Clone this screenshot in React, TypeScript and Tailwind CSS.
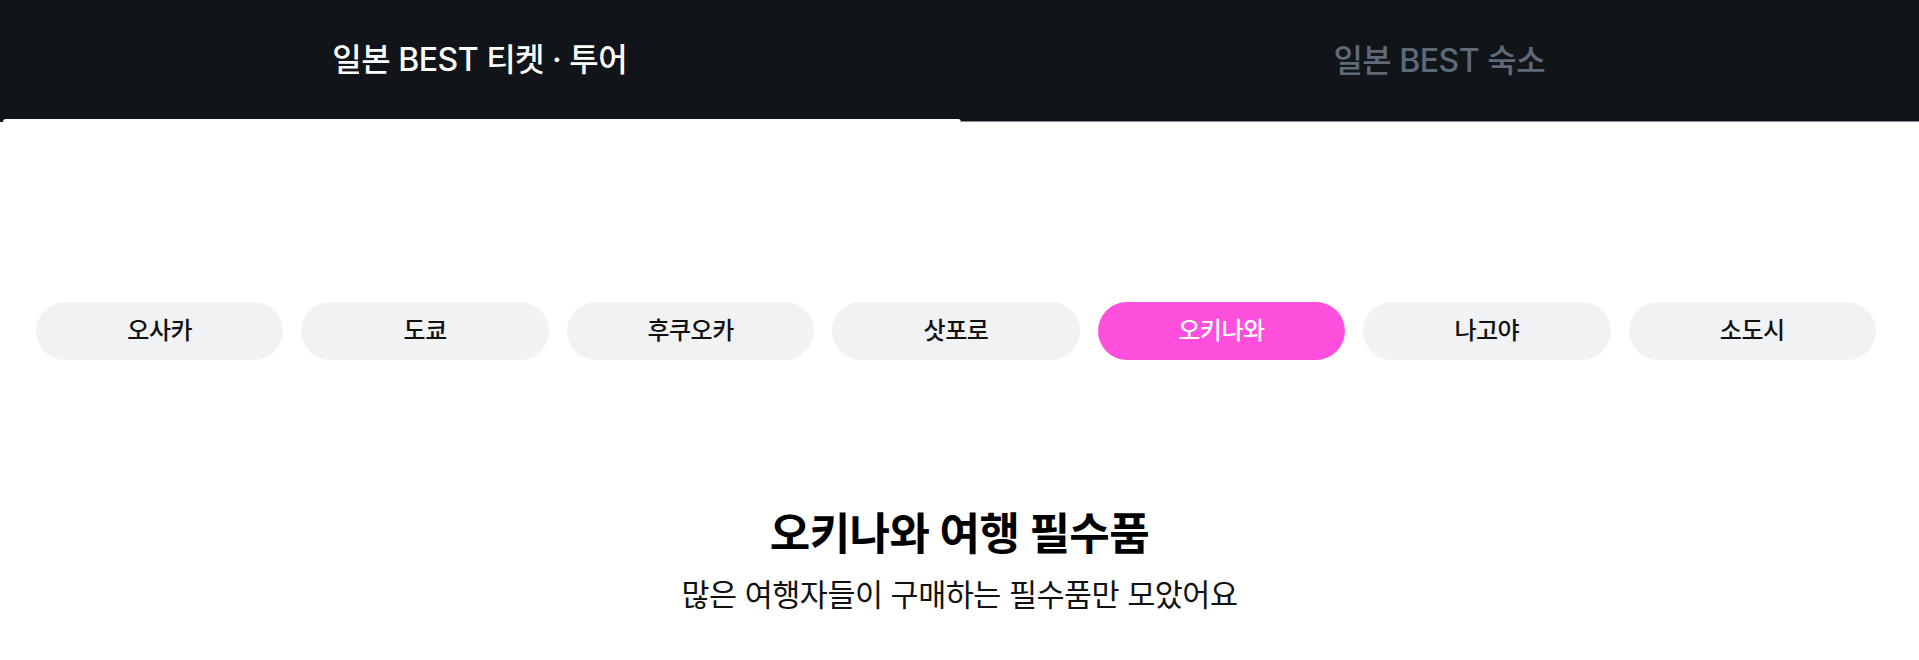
import React, { useState } from "react"

const cities = ["오사카", "도쿄", "후쿠오카", "삿포로", "오키나와", "나고야", "소도시"]

export default function App() {
  const [tab, setTab] = useState(0)
  const [city, setCity] = useState("오키나와")

  return (
    <div className="w-full min-h-[660px] bg-white font-['Inter','Noto_Sans_CJK_KR',sans-serif]">
      {/* Top tabs */}
      <div className="flex h-[122px] bg-[#111419]">
        {["일본 BEST 티켓 · 투어", "일본 BEST 숙소"].map((label, i) => (
          <button
            key={label}
            onClick={() => setTab(i)}
            className="flex-1 flex flex-col"
          >
            <span
              className={`flex-1 flex items-center justify-center text-[32px] font-medium tracking-[-0.5px] ${
                tab === i ? "text-white" : "text-[#5f6a78]"
              }`}
            >
              {label}
            </span>
            {tab === i ? (
              <span className="h-[3px] ml-[3px] mr-[-1px] bg-white rounded-t-[3px]" />
            ) : (
              <span className="h-[1px] bg-[#8a8f96]" />
            )}
          </button>
        ))}
      </div>

      {/* City pills */}
      <div className="flex gap-[18px] pl-[36px] pr-[43px] pt-[180px]">
        {cities.map((c) => (
          <button
            key={c}
            onClick={() => setCity(c)}
            className={`flex-1 h-[58px] rounded-full text-[24px] font-medium tracking-[-0.5px] ${
              city === c ? "bg-[#ff4fdc] text-white" : "bg-[#f1f2f4] text-[#111]"
            }`}
          >
            {c}
          </button>
        ))}
      </div>

      {/* Heading */}
      <div className="flex flex-col items-center pt-[146px] pb-[40px]">
        <h2 className="text-[44px] leading-[56px] font-bold text-black tracking-[-0.5px]">
          {city} 여행 필수품
        </h2>
        <p className="mt-[13px] text-[30.5px] leading-[40px] text-[#111] tracking-[-0.5px]">
          많은 여행자들이 구매하는 필수품만 모았어요
        </p>
      </div>
    </div>
  )
}
